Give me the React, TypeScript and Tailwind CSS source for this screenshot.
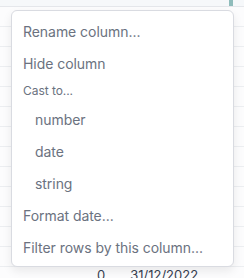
export default function App() {
  const rows = Array.from({ length: 14 });
  return (
    <div
      className="relative w-[244px] h-[278px] overflow-hidden bg-[#fcfcfd]"
      style={{ fontFamily: "Inter, 'Noto Sans', sans-serif" }}
    >
      <div className="flex flex-col">
        <div className="h-[7px] border-b border-[#e5e7eb] bg-[#f6f8fa] flex justify-end">
          <div className="w-[4px] h-[6px] bg-[#8fbcbb] mr-[11px]" />
        </div>
        {rows.map((_, i) => (
          <div key={i} className="h-[20px] border-b border-[#eceef1] shrink-0" />
        ))}
      </div>
      <div className="absolute left-[97px] top-[267px] flex gap-[25px] text-[13px] leading-[16px] text-[#374151]">
        <span>0</span>
        <span>31/12/2022</span>
      </div>
      <div className="absolute left-[11px] top-[10px] w-[223px] rounded-[6px] border border-[#d9dbe1] bg-white pt-1 pb-[3px] shadow-[0_4px_10px_rgba(0,0,0,0.08)] text-[#6b7280] tracking-[-0.05px]">
        <div className="h-8 flex items-center pl-[11px] text-[14px]">Rename column...</div>
        <div className="h-8 flex items-center pl-[11px] text-[14px]">Hide column</div>
        <div className="h-6 flex items-center pl-[11px] text-[12px]">Cast to...</div>
        <div className="h-8 flex items-center pl-[23px] text-[14px]">number</div>
        <div className="h-8 flex items-center pl-[23px] text-[14px]">date</div>
        <div className="h-8 flex items-center pl-[23px] text-[14px]">string</div>
        <div className="h-8 flex items-center pl-[11px] text-[14px]">Format date...</div>
        <div className="h-8 flex items-center pl-[11px] text-[14px]">Filter rows by this column...</div>
      </div>
    </div>
  );
}
